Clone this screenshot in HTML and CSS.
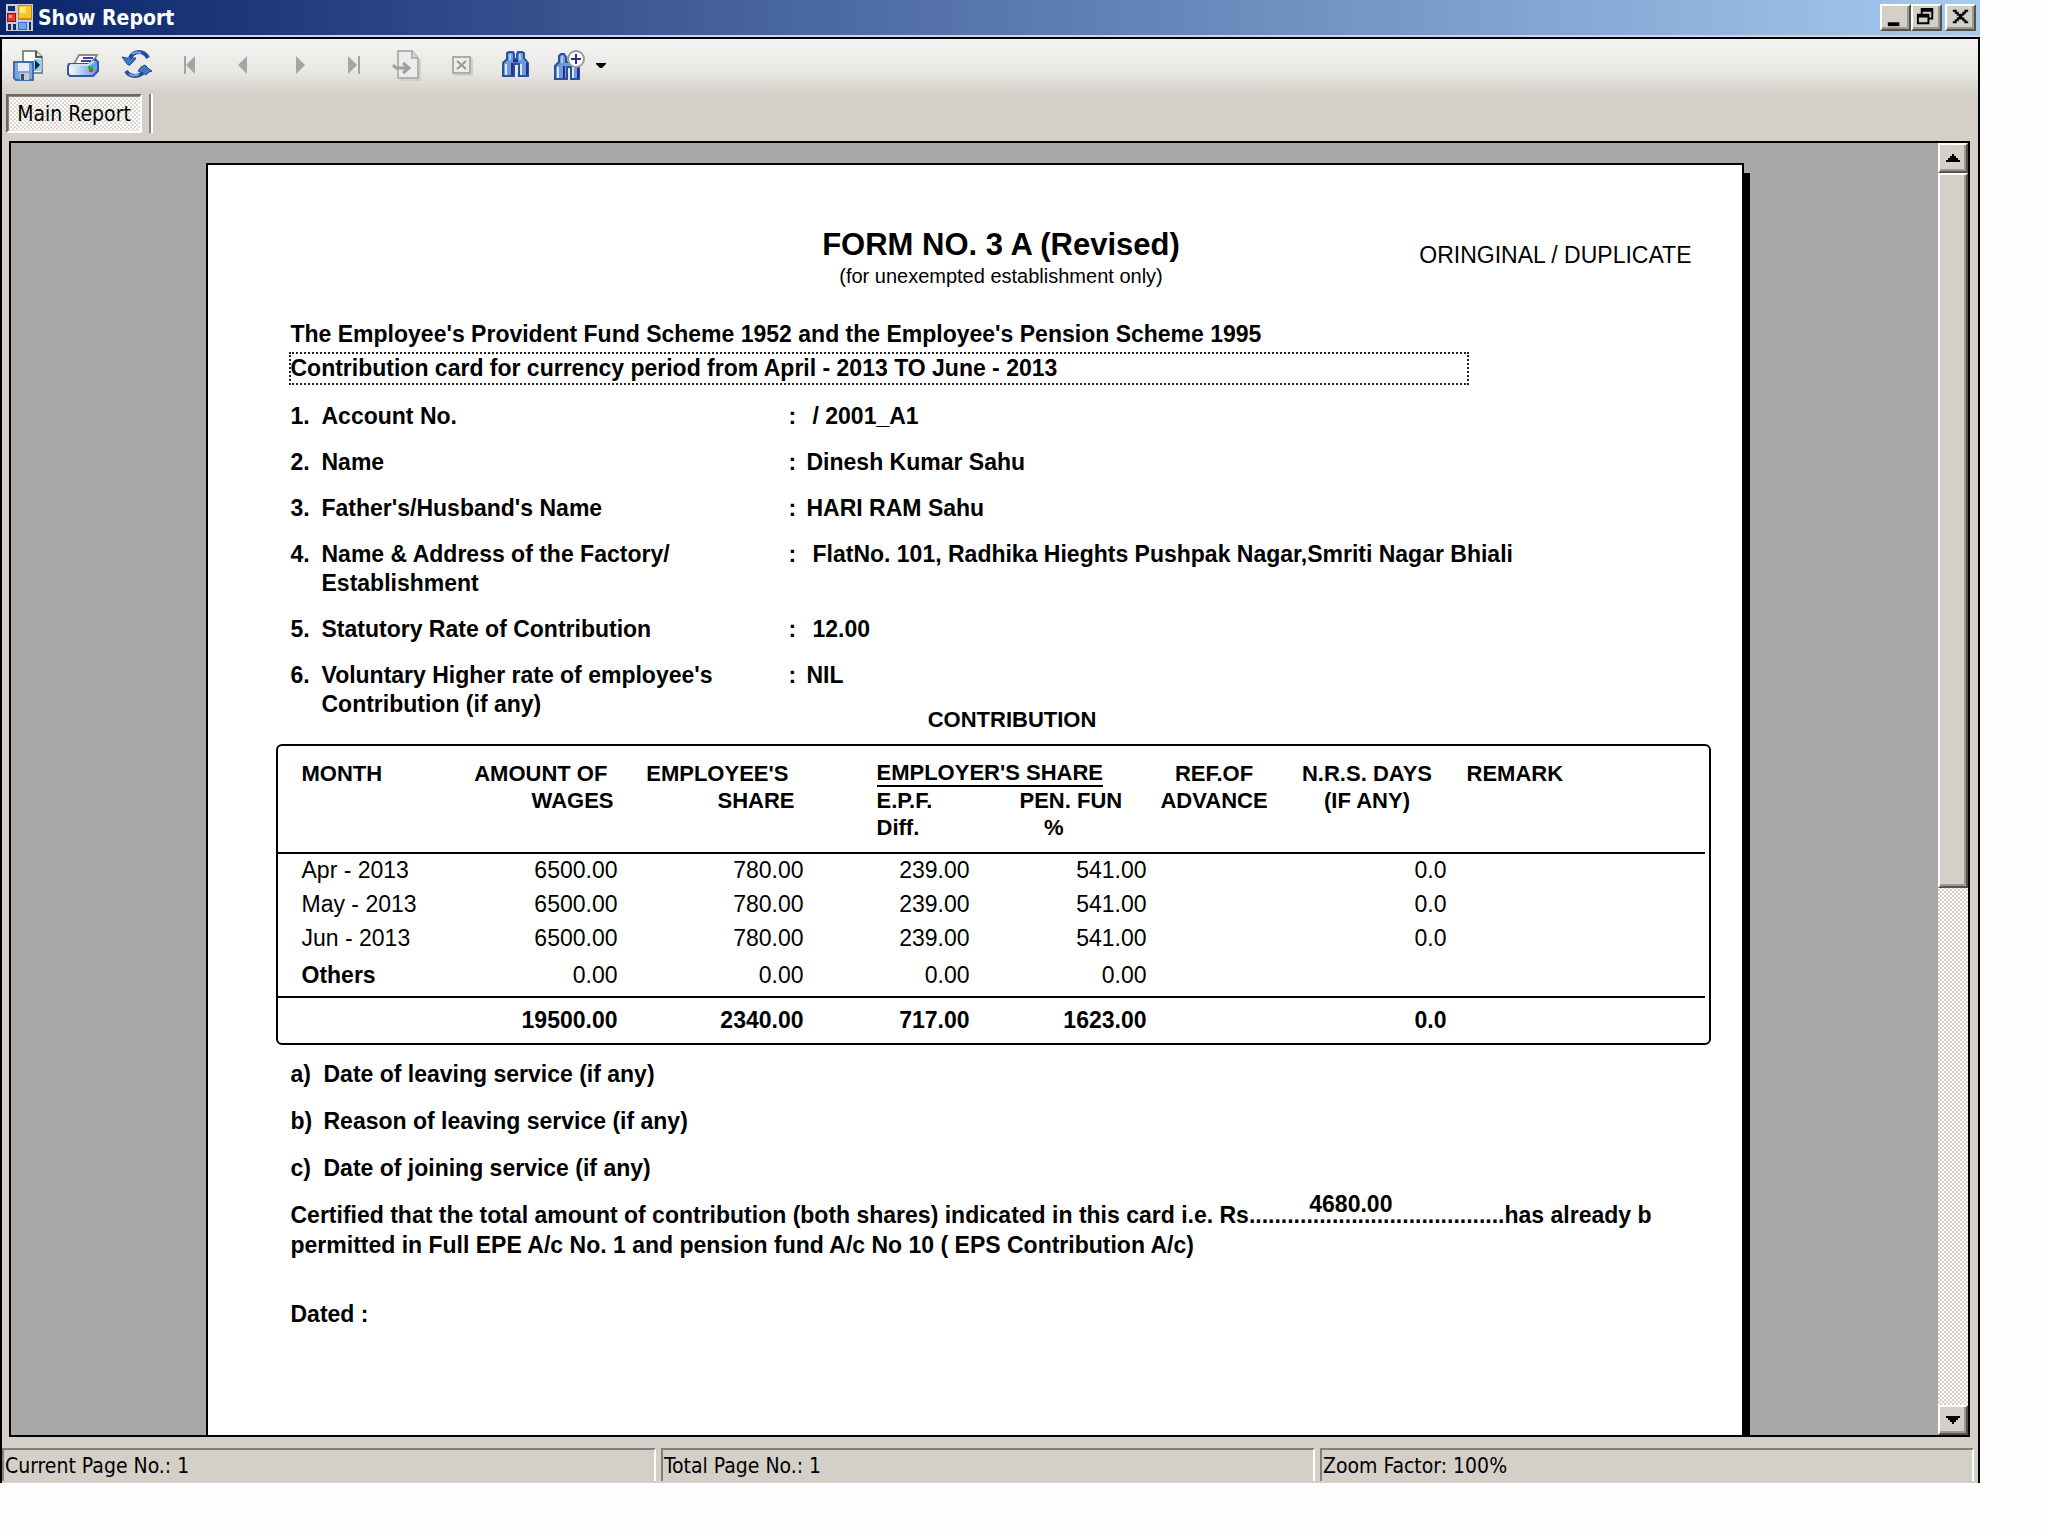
FILE: index.html
```html
<!DOCTYPE html>
<html lang="en">
<head>
<meta charset="utf-8">
<title>Show Report</title>
<link rel="stylesheet" href="styles.css">
</head>
<body>
<main class="window">
  <header class="titlebar">
    <svg class="app-icon" viewBox="0 0 27 27" aria-hidden="true">
      <rect width="27" height="27" fill="#c9ccd6"/>
      <rect x="2" y="2" width="7" height="5" fill="#14286e"/>
      <rect x="12" y="1" width="14" height="15" fill="#c98a10"/><rect x="13" y="2" width="12" height="12" fill="#f6c52c"/><rect x="14" y="3" width="6" height="6" fill="#ffe88c"/>
      <rect x="1" y="9" width="9" height="9" fill="#8e1414"/><rect x="2" y="10" width="7" height="7" fill="#dc3a2c"/><rect x="3" y="11" width="3" height="3" fill="#ff9a86"/>
      <rect x="2" y="20" width="3" height="6" fill="#14286e"/><rect x="7" y="20" width="3" height="6" fill="#14286e"/>
      <rect x="12" y="18" width="9" height="8" fill="#2f6fd2"/><rect x="13" y="19" width="7" height="6" fill="#6aa6f4"/>
      <rect x="23" y="18" width="2" height="8" fill="#14286e"/>
    </svg>
    <h1 class="title">Show Report</h1>
    <div class="captions">
      <button class="caption" aria-label="Minimize"><svg viewBox="0 0 28 24"><path d="M6 17h12v4H6z"/></svg></button>
      <button class="caption" aria-label="Restore"><svg viewBox="0 0 28 24"><path d="M8 2h13v12h-4v5H4V8h4zM10 6v2h7v4h2V6zM6 12v5h9v-5z" fill-rule="evenodd"/></svg></button>
      <button class="caption close" aria-label="Close"><svg viewBox="0 0 28 24"><path d="M6 4h4v2h2v2h4V6h2V4h4v2h-2v2h-2v2h-2v2h2v2h2v2h2v2h-4v-2h-2v-2h-4v2h-2v2H6v-2h2v-2h2v-2h2v-2h-2V8H8V6H6z"/></svg></button>
    </div>
  </header>

  <div class="client">
    <nav class="toolbar" aria-label="Report tools">
      <button class="tool" aria-label="Export report"><svg viewBox="0 0 32 32">
        <path d="M10 2h13l6 6v16H10z" fill="#fff" stroke="#8a8a8a" stroke-width="2"/>
        <path d="M23 2v6h6" fill="#d5e6f5" stroke="#555" stroke-width="2"/>
        <path d="M21 10h8v12h-8z" fill="#8fd0f2"/><path d="M22 11l5 5-5 5z" fill="#0c2340"/>
        <path d="M1 13h19v18H3l-2-2z" fill="#7ba6e0" stroke="#3f6db4" stroke-width="2"/>
        <path d="M5 14h11v8H5z" fill="#e4ecf8"/><path d="M7 24h9v7H7z" fill="#c8ccd2"/><path d="M8 25h3v6H8z" fill="#3a4a66"/>
      </svg></button>
      <button class="tool" aria-label="Print report"><svg viewBox="0 0 32 32">
        <defs><linearGradient id="body" x2="1"><stop stop-color="#fff"/><stop offset="1" stop-color="#5a93dc"/></linearGradient></defs>
        <path d="M12 6h18l-6 11H6z" fill="#fff" stroke="#8b8b93" stroke-width="2"/>
        <path d="M16 9h10M14 12h10" stroke="#3f3f9c" stroke-width="2"/>
        <path d="M2 15h20l6-5 3 3v9l-5 5H3l-2-2v-8z" fill="url(#body)" stroke="#2a5cab" stroke-width="2"/>
        <path d="M3 16h18l6-4" fill="none" stroke="#cfe2f7" stroke-width="2"/>
        <path d="M21 17h5v3h-5z" fill="#18b838"/><path d="M22 20h4v3h-4z" fill="#e03c22"/>
      </svg></button>
      <button class="tool" aria-label="Refresh"><svg viewBox="0 0 32 32">
        <path d="M9 9q3-6 9-6 6 0 9 6" fill="none" stroke="#234c9e" stroke-width="4"/>
        <path d="M11 5q4-3 9-1" fill="none" stroke="#71a9e6" stroke-width="2"/>
        <path d="M1 8l4 1h10l-2 3-4 4H7l-3-4z" fill="#3f78c8" stroke="#1e4590"/>
        <path d="M23 22q-3 5-9 5-6 0-9-5" fill="none" stroke="#234c9e" stroke-width="4"/>
        <path d="M8 25q4 3 10 0" fill="none" stroke="#71a9e6" stroke-width="2"/>
        <path d="M17 22l3-4 4-2 4 4 3 2-3 1-3 3-3-2z" fill="#3f78c8" stroke="#1e4590"/>
      </svg></button>
      <button class="tool" aria-label="First page" disabled><svg viewBox="0 0 32 32"><path d="M9 7h2v18H9zM20 7v18l-9-9z" fill="#a5a5a3"/></svg></button>
      <button class="tool" aria-label="Previous page" disabled><svg viewBox="0 0 32 32"><path d="M18 7v18l-9-9z" fill="#a5a5a3"/></svg></button>
      <button class="tool" aria-label="Next page" disabled><svg viewBox="0 0 32 32"><path d="M13 7v18l9-9z" fill="#a5a5a3"/></svg></button>
      <button class="tool" aria-label="Last page" disabled><svg viewBox="0 0 32 32"><path d="M11 7v18l9-9zM21 7h2v18h-2z" fill="#a5a5a3"/></svg></button>
      <button class="tool" aria-label="Go to page" disabled><svg viewBox="0 0 32 32">
        <path d="M8 31h21V10" fill="none" stroke="#cfcfcc" stroke-width="2"/>
        <path d="M7 2h14l6 7v20H7z" fill="#ececea" stroke="#b2b2b0" stroke-width="2"/><path d="M21 2v7h6" fill="#d8d8d6" stroke="#b2b2b0" stroke-width="2"/>
        <path d="M2 16l3 3h12M12 14l6 5-6 5" fill="none" stroke="#a0a09e" stroke-width="3"/>
      </svg></button>
      <button class="tool" aria-label="Close view" disabled><svg viewBox="0 0 32 32">
        <path d="M9 26h18V9" fill="none" stroke="#d0d0cd" stroke-width="2"/>
        <path d="M8 8h17v16H8z" fill="#ececea" stroke="#acacaa" stroke-width="2"/><path d="M12 12l9 8M21 12l-9 8" stroke="#969694" stroke-width="2"/>
      </svg></button>
      <button class="tool" aria-label="Find text"><svg viewBox="0 0 32 32">
        <path d="M8 4l2-1h4l1 2v5h3V5l1-2h4l2 1v5l4 5v13h-9V15h-5v12H4V14l4-4z" fill="#6f9ad8" stroke="#24549e" stroke-width="2"/>
        <path d="M13 14v12M28 14v12" stroke="#2c2a94" stroke-width="2"/><path d="M7 15v11M22 15v11" stroke="#dbe7f7" stroke-width="2"/><path d="M11 5v6M21 5v6" stroke="#a8ccee" stroke-width="2"/>
        <path d="M14 12h5" stroke="#2c2a94" stroke-width="3"/>
      </svg></button>
      <button class="tool" aria-label="Zoom"><svg viewBox="0 0 32 32">
        <path d="M6 7l2-2h3l2 3v5h8v3h5v14h-8V18h-4v12H2V17l4-4z" fill="#6f9ad8" stroke="#24549e" stroke-width="2"/>
        <path d="M11 17v12M25 18v11" stroke="#2c2a94" stroke-width="2"/><path d="M5 18v11M20 18v11" stroke="#dbe7f7" stroke-width="2"/><path d="M9 7v7" stroke="#a8ccee" stroke-width="2"/>
        <circle cx="23" cy="10" r="8" fill="#fff" stroke="#9c9c9c" stroke-width="2"/><path d="M23 5v10M18 10h10" stroke="#2a2c9c" stroke-width="2"/>
      </svg></button>
      <button class="tool-menu" aria-label="Zoom options"><svg viewBox="0 0 10 5"><path d="M0 0h10v1L6 5H4L0 1z"/></svg></button>
    </nav>

    <div class="tabs">
      <button class="tab">Main Report</button>
      <span class="divider"></span>
    </div>

    <div class="viewer">
      <div class="canvas">
        <article class="sheet">
          <header class="form-head">
            <div class="form-title">
              <h2>FORM NO. 3 A (Revised)</h2>
              <p>(for unexempted establishment only)</p>
            </div>
            <p class="copy">ORINGINAL / DUPLICATE</p>
          </header>
          <p class="scheme">The Employee's Provident Fund Scheme 1952 and the Employee's Pension Scheme 1995</p>
          <p class="period">Contribution card for currency period from April - 2013 TO June - 2013</p>

          <dl class="details">
            <div class="detail"><dt><span>1.</span><span>Account No.</span></dt><dd class="inset">/ 2001_A1</dd></div>
            <div class="detail"><dt><span>2.</span><span>Name</span></dt><dd>Dinesh Kumar Sahu</dd></div>
            <div class="detail"><dt><span>3.</span><span>Father's/Husband's Name</span></dt><dd>HARI RAM Sahu</dd></div>
            <div class="detail"><dt><span>4.</span><span>Name &amp; Address of the Factory/<br>Establishment</span></dt><dd class="inset">FlatNo. 101, Radhika Hieghts Pushpak Nagar,Smriti Nagar Bhiali</dd></div>
            <div class="detail"><dt><span>5.</span><span>Statutory Rate of Contribution</span></dt><dd class="inset">12.00</dd></div>
            <div class="detail"><dt><span>6.</span><span>Voluntary Higher rate of employee's<br>Contribution (if any)</span></dt><dd>NIL</dd></div>
          </dl>

          <h3 class="section">CONTRIBUTION</h3>
          <div class="grid-box">
            <table class="contrib">
              <colgroup><col class="c-month"><col class="c-wages"><col class="c-share"><col class="c-epf"><col class="c-pen"><col class="c-ref"><col class="c-days"><col></colgroup>
              <thead>
                <tr>
                  <th class="left" rowspan="2">MONTH</th>
                  <th class="wages" rowspan="2">AMOUNT OF&nbsp;<br>WAGES</th>
                  <th class="share" rowspan="2">EMPLOYEE'S&nbsp;<br>SHARE</th>
                  <th class="epf" colspan="2"><span class="ruled">EMPLOYER'S SHARE</span></th>
                  <th class="ref" rowspan="2">REF.OF<br>ADVANCE</th>
                  <th class="days" rowspan="2">N.R.S. DAYS<br>(IF ANY)</th>
                  <th class="remark" rowspan="2">REMARK</th>
                </tr>
                <tr>
                  <th class="epf">E.P.F.<br>Diff.</th>
                  <th class="pen">PEN. FUN<br>&nbsp;&nbsp;&nbsp;&nbsp;%</th>
                </tr>
              </thead>
              <tbody>
                <tr><td class="left">Apr - 2013</td><td>6500.00</td><td>780.00</td><td>239.00</td><td>541.00</td><td></td><td>0.0</td><td></td></tr>
                <tr><td class="left">May - 2013</td><td>6500.00</td><td>780.00</td><td>239.00</td><td>541.00</td><td></td><td>0.0</td><td></td></tr>
                <tr><td class="left">Jun - 2013</td><td>6500.00</td><td>780.00</td><td>239.00</td><td>541.00</td><td></td><td>0.0</td><td></td></tr>
                <tr class="others"><th class="left">Others</th><td>0.00</td><td>0.00</td><td>0.00</td><td>0.00</td><td></td><td></td><td></td></tr>
              </tbody>
              <tfoot>
                <tr><td></td><td>19500.00</td><td>2340.00</td><td>717.00</td><td>1623.00</td><td></td><td>0.0</td><td></td></tr>
              </tfoot>
            </table>
          </div>

          <ul class="notes">
            <li><span>a)</span>Date of leaving service (if any)</li>
            <li><span>b)</span>Reason of leaving service (if any)</li>
            <li><span>c)</span>Date of joining service (if any)</li>
          </ul>
          <p class="certificate">Certified that the total amount of contribution (both shares) indicated in this card i.e. Rs.<span class="blank">.......................................<span class="amount">4680.00</span></span>has already b<br>permitted in Full EPE A/c No. 1 and pension fund A/c No 10 ( EPS Contribution A/c)</p>
          <p class="dated">Dated :</p>
        </article>
      </div>
      <div class="scrollbar">
        <button class="arrow" aria-label="Scroll up"><svg viewBox="0 0 14 8"><path d="M6 0h2v2h2v2h2v2h2v2H0V6h2V4h2V2h2z"/></svg></button>
        <div class="track"><div class="thumb"></div></div>
        <button class="arrow" aria-label="Scroll down"><svg viewBox="0 0 14 8"><path d="M6 8h2V6h2V4h2V2h2V0H0v2h2v2h2v2h2z"/></svg></button>
      </div>
    </div>

    <footer class="status">
      <p>Current Page No.: 1</p>
      <p>Total Page No.: 1</p>
      <p>Zoom Factor: 100%</p>
    </footer>
  </div>
</main>
</body>
</html>
```
FILE: styles.css
```css
* { box-sizing: border-box; }
body, h1, h2, h3, p, dl, dd, ul { margin: 0; padding: 0; }

body {
  height: 100vh;
  padding: 0 68px 53px 0;
  background: #fefefe;
  color: #000;
  font-family: "DejaVu Sans Condensed", "DejaVu Sans", Tahoma, sans-serif;
  font-size: 21px;
}
button { padding: 0; border: 0; background: none; color: inherit; font: inherit; }
svg { display: block; }

.window { display: flex; flex-direction: column; height: 100%; background: #d4d0c8; }

/* Title bar */
.titlebar {
  display: flex;
  align-items: center;
  gap: 5px;
  height: 37px;
  padding: 0 4px 0 6px;
  border-bottom: 2px solid #d4d4dc;
  background: linear-gradient(90deg, #0a246a, #a6caf0);
}
.app-icon { width: 27px; height: 27px; }
.title { flex: 1; color: #fff; font-size: 21px; font-weight: bold; line-height: 28px; }
.captions { display: flex; }
.caption, .arrow, .thumb {
  border: 2px solid;
  border-color: #fff #55534e #55534e #fff;
  background: #d4d0c8;
  box-shadow: inset -2px -2px #9c9890;
}
.caption { width: 31px; height: 27px; }
.caption svg { width: 27px; height: 23px; }
.close { margin-left: 3px; }

/* Client area */
.client {
  display: flex;
  flex: 1;
  flex-direction: column;
  min-height: 0;
  border: 2px solid #000;
  border-bottom: 0;
}
.toolbar {
  display: flex;
  height: 55px;
  padding-bottom: 3px;
  background: linear-gradient(#f4f4f2, #e8e7e3 60%, #d4d0c8);
}
.tool { display: grid; place-items: center; width: 54px; }
.tool svg { width: 32px; height: 32px; }
.tool-menu { width: 18px; }
.tool-menu svg { width: 10px; height: 5px; }

.tabs { display: flex; gap: 7px; height: 47px; padding: 0 4px 8px; }
.tab {
  width: 136px;
  border: 2px solid;
  border-color: #6b6964 #fff #fff #6b6964;
  background: repeating-conic-gradient(#fff 0 25%, #dcd9d2 0 50%) 0 0 / 4px 4px;
  box-shadow: inset 1px 1px #8a8781;
}
.divider { width: 4px; border-left: 2px solid #808080; border-right: 2px solid #fff; }

/* Report viewer */
.viewer {
  display: flex;
  flex: 1;
  min-height: 0;
  margin: 0 8px 0 7px;
  border: 2px solid #000;
  background: #a9a7a7;
}
.canvas { display: flex; flex: 1; min-width: 0; padding-top: 20px; overflow: hidden; }
.sheet {
  flex: 1;
  max-width: 1538px;
  margin: 0 auto;
  padding: 62px 50px 0 83px;
  border: 2px solid #000;
  border-bottom: 0;
  background: #fff;
  box-shadow: 6px 10px #000;
  font: bold 23px/29px "Liberation Sans", Arial, sans-serif;
  white-space: nowrap;
}

.form-head { display: grid; grid-template-columns: 1fr auto 1fr; padding-left: 20px; font-weight: normal; }
.form-title { grid-column: 2; text-align: center; }
.form-title h2 { font-size: 31px; line-height: 36px; }
.form-title p { font-size: 20px; line-height: 26px; }
.copy { justify-self: end; padding-top: 14px; }
.scheme { margin-top: 31px; }
.period { width: 84%; margin: 5px 0 19px; outline: 2px dotted #222; }

.details { display: grid; gap: 17px; }
.detail { display: flex; }
.detail dt { display: grid; grid-template-columns: 31px 467px; }
.detail dd { display: flex; }
.detail dd::before { content: ":"; width: 18px; }
.detail .inset::before { width: 24px; }

.section { margin: -13px 0 10px; padding-left: 42px; font-size: 22px; line-height: 28px; text-align: center; }

.grid-box { margin: 0 -19px 0 -15px; padding-right: 4px; border: 2px solid #000; border-radius: 6px; }
.contrib { width: 100%; border-collapse: collapse; table-layout: fixed; }
.c-month { width: 193px; }
.c-wages { width: 147px; }
.c-share { width: 186px; }
.c-epf { width: 166px; }
.c-pen { width: 177px; }
.c-ref { width: 143px; }
.c-days { width: 157px; }
.contrib th, .contrib td { padding: 0; }
.contrib td { text-align: right; font-weight: normal; }
.contrib thead { font-size: 22px; line-height: 27px; }
.contrib thead th { padding-top: 14px; vertical-align: top; }
.contrib thead tr + tr th { padding: 0 0 11px; }
.contrib tbody { border: solid #000; border-width: 2px 0; }
.contrib tbody tr { height: 34px; }
.contrib tbody .others { height: 42px; }
.contrib tfoot tr { height: 46px; }
.contrib tfoot td { font-weight: bold; }
.contrib .left { padding-left: 24px; text-align: left; }
.contrib .remark { padding-left: 20px; text-align: left; }
.contrib thead .wages { padding-right: 4px; text-align: right; }
.contrib thead .share { padding-right: 9px; text-align: right; }
.contrib thead .epf { padding-left: 73px; text-align: left; }
.contrib thead tr + tr .pen { padding-left: 50px; text-align: left; }
.contrib thead .ref { padding-right: 8px; }
.contrib thead .days { padding-right: 2px; }
.ruled { display: block; width: 226px; border-bottom: 2px solid #000; line-height: 25px; }

.notes { display: grid; gap: 18px; margin-top: 15px; list-style: none; }
.notes li { display: flex; }
.notes span { width: 33px; }
.certificate { margin-top: 17px; line-height: 30px; }
.blank { position: relative; }
.amount { position: absolute; top: -13px; left: 54px; }
.dated { margin-top: 40px; }

/* Scroll bar */
.scrollbar { display: flex; flex-direction: column; width: 30px; }
.arrow { display: grid; place-items: center; height: 30px; }
.arrow svg { width: 14px; height: 8px; }
.track { flex: 1; background: repeating-conic-gradient(#fff 0 25%, #d4d0c8 0 50%) 0 0 / 4px 4px; }
.thumb { height: 58%; }

/* Status bar */
.status { display: flex; gap: 5px; padding: 11px 4px 2px 0; }
.status p {
  flex: 1;
  height: 33px;
  padding-left: 1px;
  border: solid;
  border-width: 2px 2px 0;
  border-color: #808080 #fff #808080 #808080;
  line-height: 32px;
}
```
